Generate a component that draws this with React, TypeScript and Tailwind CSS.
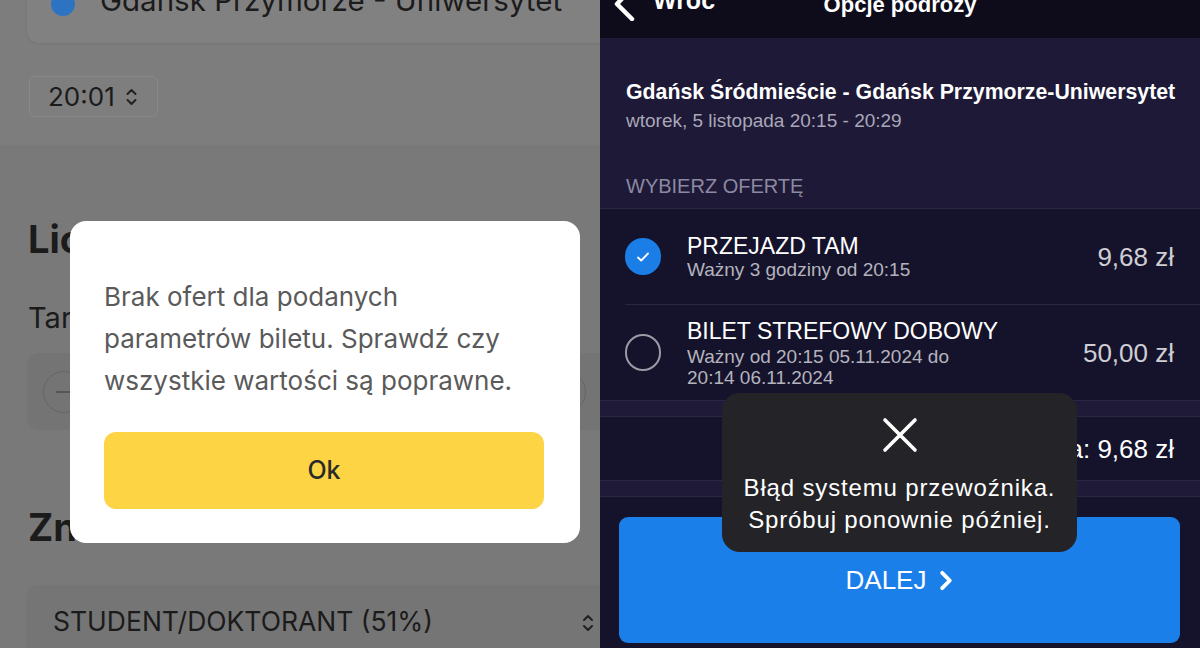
import React from 'react'

const UpDown = ({ className }: { className?: string }) => (
  <svg viewBox="0 0 12 20" className={className} fill="none" stroke="currentColor" strokeWidth="2" strokeLinecap="round" strokeLinejoin="round">
    <path d="M2 7l4-4 4 4" />
    <path d="M2 13l4 4 4-4" />
  </svg>
)

const LeftScreen = () => {
  return (
    <div className="relative w-[600px] h-[648px] overflow-hidden bg-[#797979] font-['Inter',sans-serif] text-[#1b1b1b]">
      <section className="bg-[#7d7d7d] h-[145px] pt-px">
        <div className="-mt-[29px] ml-[27px] -mr-[24px] h-[71px] rounded-xl bg-[#818181] shadow-[0_1px_3px_rgba(0,0,0,0.08)] flex items-start pt-[12px]">
          <div className="ml-[24px] mt-[8px] w-[24px] h-[24px] rounded-full bg-[#2c74c2] border-[5px] border-[#2c74c2]" />
          <p className="ml-[25px] text-[29.5px] leading-[32px] whitespace-nowrap">Gdańsk Przymorze - Uniwersytet</p>
        </div>
        <div className="mt-[33px] ml-[29px] w-[129px] h-[41px] rounded-md border border-[#888] bg-[#7e7e7e] flex items-center pl-[18px] gap-[10px]">
          <span className="text-[26px] leading-none">20:01</span>
          <UpDown className="w-[13px] h-[20px] text-[#222]" />
        </div>
      </section>

      <div className="px-[28px]">
        <h2 className="mt-[75px] text-[38px] leading-[38px] font-bold">Liczba biletów</h2>
        <p className="mt-[45px] text-[29px] leading-[29px]">Taryfa ulgowa</p>
      </div>
      <div className="mt-[21px] ml-[27px] -mr-[30px] h-[77px] rounded-xl bg-[#747474] flex items-center justify-between pl-[16px] pr-[44px]">
        <div className="w-[42px] h-[42px] rounded-full border border-[#666] flex items-center justify-center">
          <div className="w-[16px] h-[2px] bg-[#555]" />
        </div>
        <div className="w-[42px] h-[42px] rounded-full border border-[#666] flex items-center justify-center relative">
          <div className="w-[14px] h-[3px] bg-[#222]" />
          <div className="absolute w-[3px] h-[14px] bg-[#222]" />
        </div>
      </div>

      <h2 className="mt-[78px] ml-[28px] text-[38px] leading-[38px] font-bold">Zniżka</h2>
      <div className="mt-[39px] ml-[26px] -mr-[30px] h-[90px] rounded-xl bg-[#757575] flex items-start pt-[23px] pl-[27px] pr-[36px] justify-between">
        <span className="text-[26.5px] leading-[26px]">STUDENT/DOKTORANT (51%)</span>
        <UpDown className="w-[12px] h-[20px] text-[#222] mt-[5px]" />
      </div>

      {/* modal */}
      <div className="absolute left-[70px] top-[221px] w-[510px] h-[322px] rounded-[16px] bg-white px-[34px] pt-[55px]">
        <p className="text-[26px] leading-[42px] text-[#5a5a5a] whitespace-nowrap">
          Brak ofert dla podanych
          <br />
          parametrów biletu. Sprawdź czy
          <br />
          wszystkie wartości są poprawne.
        </p>
        <button className="mt-[30px] w-[440px] h-[77px] rounded-[12px] bg-[#fdd444] text-[25px] font-medium text-[#2a2a2a]">Ok</button>
      </div>
    </div>
  )
}

const Radio = ({ checked }: { checked: boolean }) =>
  checked ? (
    <div className="w-[36px] h-[37px] shrink-0 rounded-full bg-[#1a7ee6] flex items-center justify-center">
      <svg viewBox="0 0 16 16" className="w-[16px] h-[16px]" fill="none" stroke="white" strokeWidth="1.8" strokeLinecap="round" strokeLinejoin="round">
        <path d="M3 8.5l3.2 3L13 4.5" />
      </svg>
    </div>
  ) : (
    <div className="w-[36px] h-[37px] shrink-0 rounded-full border-2 border-[#9c9aa6]" />
  )

const RightScreen = () => {
  return (
    <div className="relative w-[600px] h-[648px] overflow-hidden bg-[#15132b] font-['Liberation_Sans',Arial,sans-serif] text-white">
      <header className="h-[38px] bg-[#0e0c1b] relative flex items-start">
        <div className="flex items-start -mt-[11px] ml-[14px]">
          <svg viewBox="0 0 22 36" className="w-[22px] h-[36px] -mt-[4px]" fill="none" stroke="white" strokeWidth="4.5" strokeLinecap="round" strokeLinejoin="round">
            <path d="M18 3L3 19l15 15" />
          </svg>
          <span className="ml-[17px] text-[25px] leading-[30px] font-bold -mt-[4px]">Wróc</span>
        </div>
        <span className="absolute left-0 right-0 -top-[6px] text-center text-[22px] leading-[22px] font-bold">Opcje podróży</span>
      </header>

      <section className="bg-[#1d1936] pt-[42px] pb-[11px] pl-[26px] border-b border-[#2a2742]">
        <h1 className="text-[21.3px] leading-[24px] font-bold whitespace-nowrap">Gdańsk Śródmieście - Gdańsk Przymorze-Uniwersytet</h1>
        <p className="mt-[6px] text-[19px] leading-[22px] text-[#a9a7b8]">wtorek, 5 listopada 20:15 - 20:29</p>
        <p className="mt-[43px] text-[20px] leading-[22px] text-[#8c89a2]">WYBIERZ OFERTĘ</p>
      </section>

      <div className="pl-[25px]">
        <div className="h-[96px] flex items-center border-b border-[#2a2742] pr-[26px]">
          <Radio checked />
          <div className="ml-[26px] flex-1">
            <p className="text-[23px] leading-[26px]">PRZEJAZD TAM</p>
            <p className="text-[19px] leading-[22px] text-[#b4b3bd]">Ważny 3 godziny od 20:15</p>
          </div>
          <span className="text-[26px] leading-[30px] text-[#cfced4]">9,68 zł</span>
        </div>
        <div className="h-[95px] flex items-center pr-[26px]">
          <Radio checked={false} />
          <div className="ml-[26px] flex-1">
            <p className="text-[23px] leading-[26px]">BILET STREFOWY DOBOWY</p>
            <p className="mt-[2px] text-[19px] leading-[21px] text-[#b4b3bd]">
              Ważny od 20:15 05.11.2024 do
              <br />
              20:14 06.11.2024
            </p>
          </div>
          <span className="text-[26px] leading-[30px] text-[#cfced4]">50,00 zł</span>
        </div>
      </div>

      <div className="h-[17px] bg-[#1e1a38] border-y border-[#2a2742]" />
      <div className="h-[63px] flex items-center justify-end pr-[26px]">
        <span className="text-[26px] leading-[30px]">Suma: 9,68 zł</span>
      </div>
      <div className="h-[17px] bg-[#1e1a38] border-y border-[#2a2742]" />

      <div className="px-[19px] pt-[20px]">
        <button className="w-[561px] h-[126px] rounded-[9px] bg-[#1b7fe9] flex items-center justify-center gap-[13px]">
          <span className="text-[26px] leading-[30px]">DALEJ</span>
          <svg viewBox="0 0 14 22" className="w-[14px] h-[21px]" fill="none" stroke="white" strokeWidth="4" strokeLinecap="round" strokeLinejoin="round">
            <path d="M3 3l8 8-8 8" />
          </svg>
        </button>
      </div>

      {/* toast */}
      <div className="absolute left-[122px] top-[393px] w-[355px] h-[159px] rounded-[18px] bg-[#242428] flex flex-col items-center pt-[24px]">
        <svg viewBox="0 0 36 36" className="w-[36px] h-[36px]" fill="none" stroke="white" strokeWidth="3.6" strokeLinecap="round">
          <path d="M3 3l30 30M33 3L3 33" />
        </svg>
        <p className="mt-[19px] text-center text-[24px] leading-[32px] tracking-[0.035em]">
          Błąd systemu przewoźnika.
          <br />
          Spróbuj ponownie później.
        </p>
      </div>
    </div>
  )
}

export default function App() {
  return (
    <div className="flex w-[1200px] h-[648px] overflow-hidden">
      <LeftScreen />
      <RightScreen />
    </div>
  )
}
